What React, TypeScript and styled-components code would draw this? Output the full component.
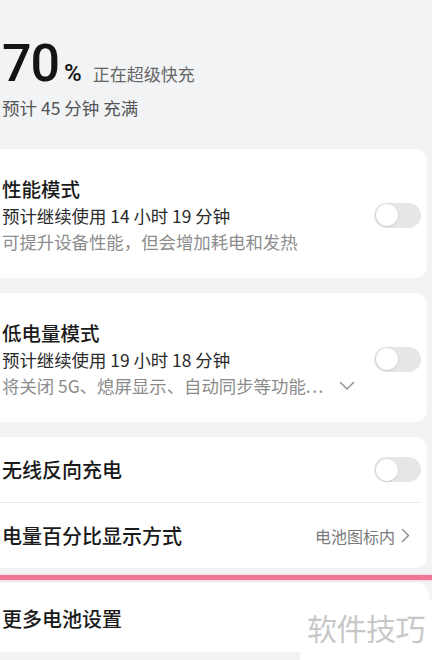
import React from "react"
import styled, { createGlobalStyle } from "styled-components"

const GlobalStyle = createGlobalStyle`
  html, body {
    margin: 0;
    padding: 0;
    background: #f2f3f5;
  }
  body {
    font-family: "Noto Sans CJK SC", "Noto Sans", sans-serif;
    color: #1a1a1a;
  }
`

const Page = styled.div`
  position: relative;
  width: 432px;
  height: 660px;
  overflow: hidden;
  background: #f2f3f5;
`

const Hero = styled.div`
  padding: 34px 0 0 2px;
`

const LevelRow = styled.div`
  display: flex;
  align-items: baseline;
  height: 60px;
`

const Level = styled.span`
  font-family: Roboto, "Noto Sans", sans-serif;
  font-size: 52px;
  font-weight: 500;
  line-height: 60px;
  letter-spacing: -1px;
  color: #141414;
`

const Percent = styled.span`
  font-family: Roboto, "Noto Sans", sans-serif;
  font-size: 24px;
  font-weight: 500;
  margin-left: 5px;
  color: #141414;
`

const Status = styled.span`
  font-size: 17px;
  margin-left: 11px;
  color: #666;
`

const Eta = styled.div`
  margin-top: 1px;
  font-size: 17.5px;
  line-height: 26px;
  color: #555;
`

const Card = styled.div<{ $top: number }>`
  margin-top: ${p => p.$top}px;
  width: 427px;
  background: #fff;
  border-radius: 0 12px 12px 0;
`

const ModeCard = styled(Card)`
  display: flex;
  align-items: center;
  padding: 26px 6px 23px 2px;
  box-sizing: border-box;
`

const ModeText = styled.div`
  flex: 1;
`

const Title = styled.div`
  font-size: 19.5px;
  font-weight: 500;
  line-height: 28px;
  color: #1a1a1a;
`

const Line = styled.div<{ $muted?: boolean }>`
  display: flex;
  align-items: center;
  font-size: 17.4px;
  line-height: 26px;
  color: ${p => (p.$muted ? "#8c8c8c" : "#2a2a2a")};
`

const Ellipsis = styled.span`
  letter-spacing: 1.5px;
`

const Row = styled.div`
  display: flex;
  align-items: center;
  height: 65px;
  padding: 0 6px 0 2px;
`

const RowTitle = styled.div`
  flex: 1;
  font-size: 20px;
  font-weight: 500;
  color: #1a1a1a;
`

const Divider = styled.div`
  height: 1px;
  margin-right: 6px;
  background: #ebebeb;
`

const Value = styled.span`
  display: flex;
  align-items: center;
  gap: 6px;
  margin-right: 11px;
  font-size: 16px;
  color: #7a7a7a;
`

const Track = styled.div`
  position: relative;
  width: 47px;
  height: 25px;
  border-radius: 13px;
  background: #e6e6e6;
  flex-shrink: 0;
`

const Knob = styled.div`
  position: absolute;
  left: 1.5px;
  top: 1.5px;
  width: 22px;
  height: 22px;
  border-radius: 50%;
  background: #fff;
  box-shadow: 0 0 0 0.5px rgba(0, 0, 0, 0.08), 0 1px 2px rgba(0, 0, 0, 0.08);
`

const Highlight = styled.div`
  height: 5px;
  margin: 7px 0 3px;
  background: #f27596;
  box-shadow: 0 0 2px rgba(242, 117, 150, 0.55);
`

const MoreCard = styled(Card)`
  padding: 22px 0 19px 2px;
  font-size: 20px;
  font-weight: 500;
  line-height: 28px;
`

const Watermark = styled.div`
  position: absolute;
  left: 300px;
  top: 600px;
  width: 132px;
  height: 60px;
  background: #fff;
  padding-left: 7px;
  box-sizing: border-box;
  font-size: 30px;
  line-height: 54px;
  color: #c8c8c8;
  letter-spacing: -0.5px;
`

const Toggle = () => (
  <Track>
    <Knob />
  </Track>
)

const ChevronDown = () => (
  <svg width="16" height="10" viewBox="0 0 16 10" style={{ marginLeft: 14 }}>
    <path d="M1.5 1.5 L8 8 L14.5 1.5" fill="none" stroke="#8a8a8a" strokeWidth="1.4" strokeLinecap="round" strokeLinejoin="round" />
  </svg>
)

const ChevronRight = () => (
  <svg width="9" height="15" viewBox="0 0 9 15">
    <path d="M1.5 1.5 L7.5 7.5 L1.5 13.5" fill="none" stroke="#8a8a8a" strokeWidth="1.4" strokeLinecap="round" strokeLinejoin="round" />
  </svg>
)

export default function App() {
  return (
    <Page>
      <GlobalStyle />
      <Hero>
        <LevelRow>
          <Level>70</Level>
          <Percent>%</Percent>
          <Status>正在超级快充</Status>
        </LevelRow>
        <Eta>预计 45 分钟 充满</Eta>
      </Hero>

      <ModeCard $top={28}>
        <ModeText>
          <Title>性能模式</Title>
          <Line>预计继续使用 14 小时 19 分钟</Line>
          <Line $muted>可提升设备性能，但会增加耗电和发热</Line>
        </ModeText>
        <Toggle />
      </ModeCard>

      <ModeCard $top={15}>
        <ModeText>
          <Title>低电量模式</Title>
          <Line>预计继续使用 19 小时 18 分钟</Line>
          <Line $muted>
            将关闭 5G、熄屏显示、自动同步等功能<Ellipsis>...</Ellipsis>
            <ChevronDown />
          </Line>
        </ModeText>
        <Toggle />
      </ModeCard>

      <Card $top={15}>
        <Row>
          <RowTitle>无线反向充电</RowTitle>
          <Toggle />
        </Row>
        <Divider />
        <Row>
          <RowTitle>电量百分比显示方式</RowTitle>
          <Value>
            电池图标内
            <ChevronRight />
          </Value>
        </Row>
      </Card>

      <Highlight />

      <MoreCard $top={0}>更多电池设置</MoreCard>

      <Watermark>软件技巧</Watermark>
    </Page>
  )
}
